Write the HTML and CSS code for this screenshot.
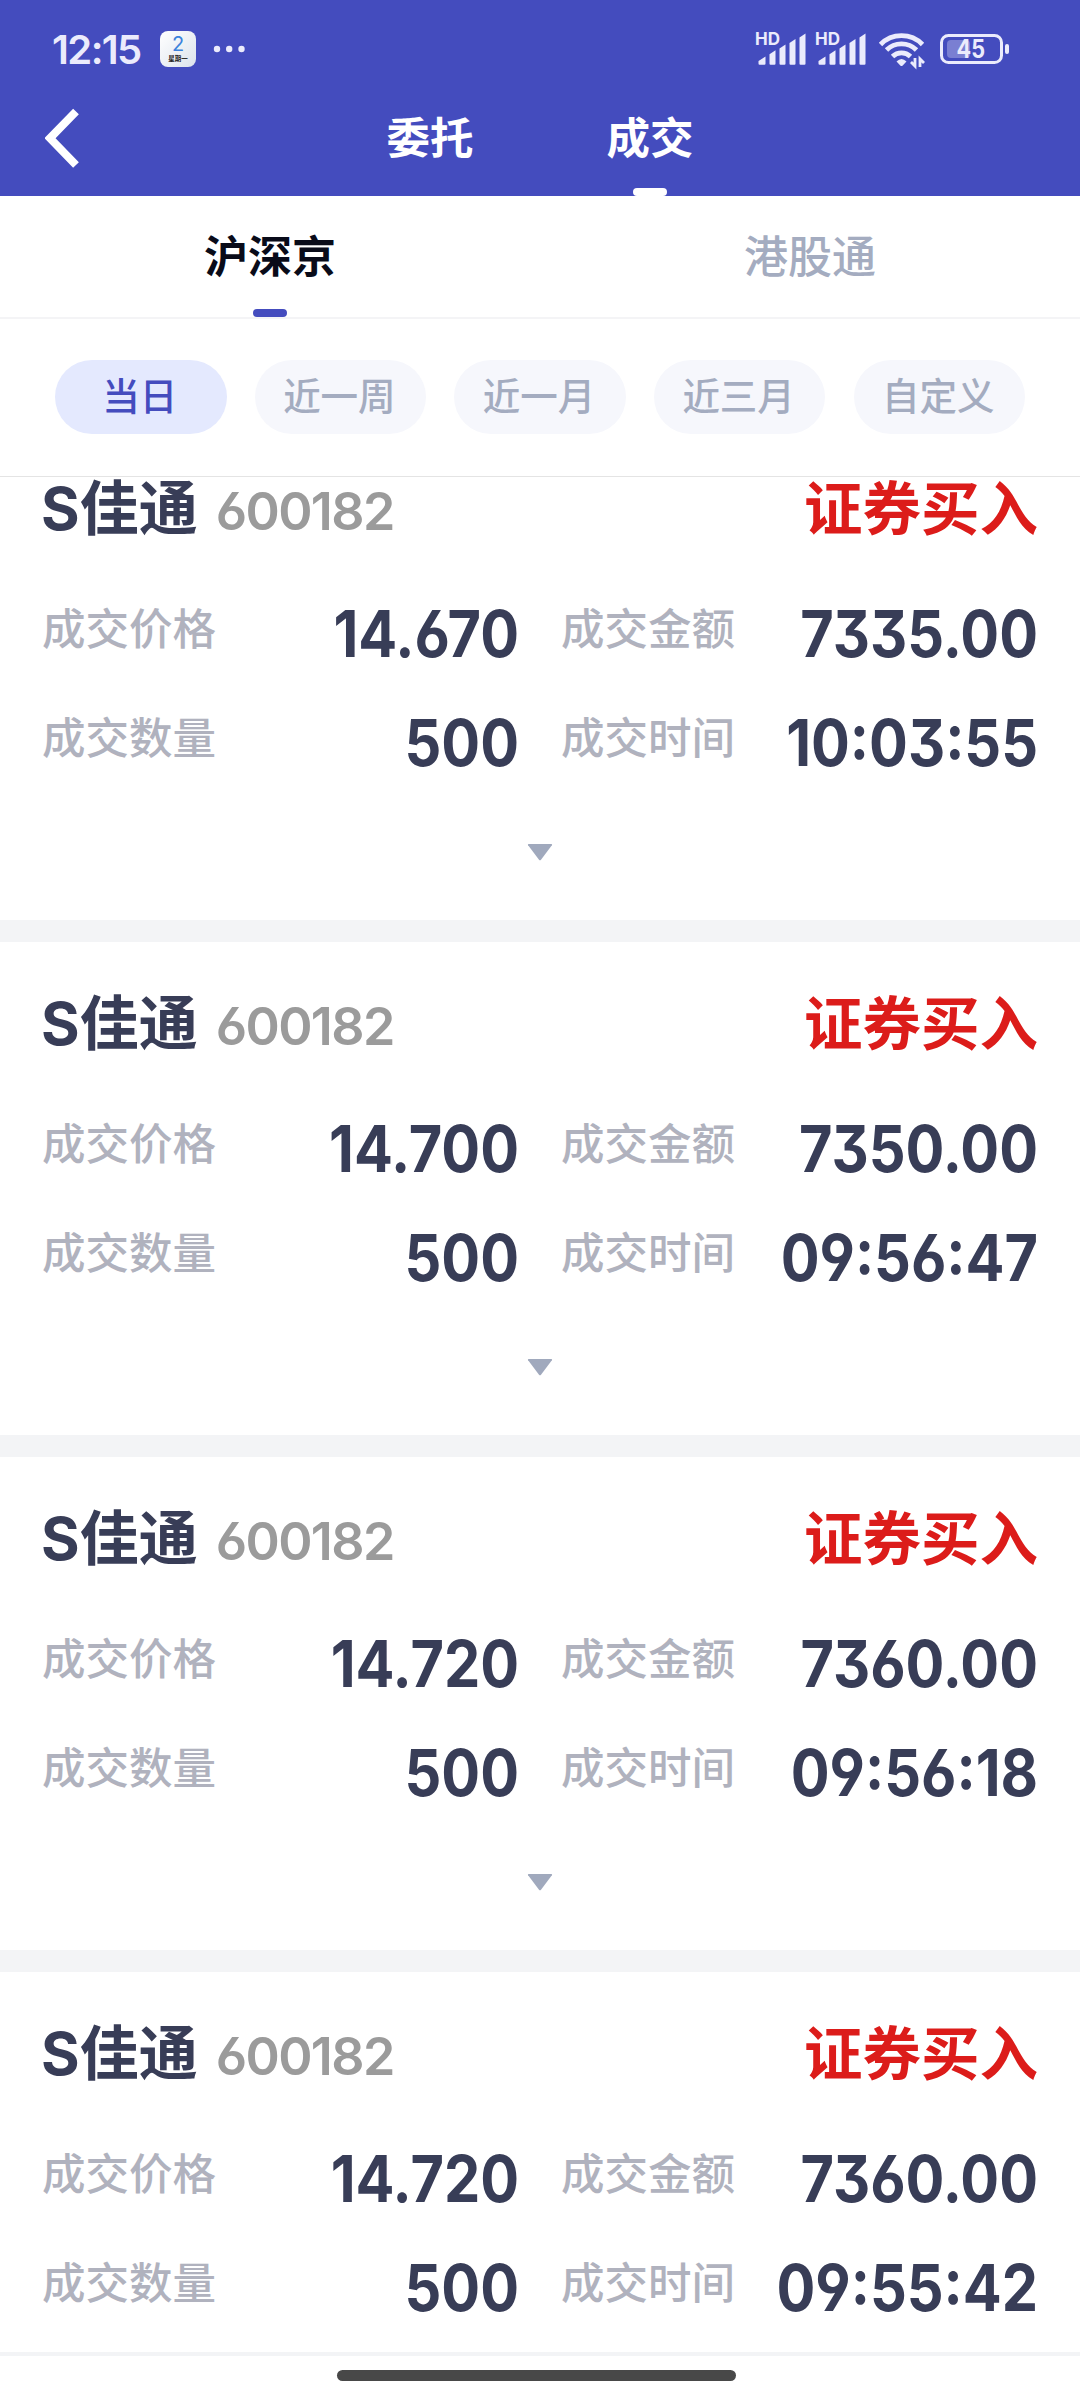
FILE: index.html
```html
<!DOCTYPE html>
<html lang="zh-CN">
<head>
<meta charset="utf-8">
<title>成交</title>
<link rel="stylesheet" href="styles.css">
</head>
<body>
<header class="header">
  <div class="status">
    <span class="clock">12:15</span>
    <span class="calendar"><b class="cal-day">2</b><i class="cal-week">星期一</i></span>
    <svg class="more" width="32" height="8" viewBox="0 0 32 8"><circle cx="4" cy="4" r="3.2"/><circle cx="16.2" cy="4" r="3.2"/><circle cx="28.5" cy="4" r="3.2"/></svg>
    <svg class="sysicons" width="260" height="40" viewBox="0 0 260 40">
      <defs><g id="signal"><text class="hd" x="-1" y="13.2" textLength="25">HD</text><path d="M2.500 31.500v-2.500l7-4.500v7.200q0 1-1 1H3.500q-1 0-1-1.200zM13.500 31.700v-9.500l6-4v13.500q0 1-1 1h-4q-1 0-1-1zM23.500 31.700V16.500l6-4v19.200q0 1-1 1h-4q-1 0-1-1zM33.500 31.700V11l6-4v24.700q0 1-1 1h-4q-1 0-1-1zM43.500 31.700V5.500l6-4v30.200q0 1-1 1h-4q-1 0-1-1z"/></g></defs>
      <use href="#signal" x="0" y="0"/><use href="#signal" x="60" y="0"/>
      <path class="arc" d="M124.500 12.500a29.500 29.500 0 0 1 42 0M130.500 18a21.300 21.300 0 0 1 30 0M136.500 24.500a12.800 12.800 0 0 1 18 0"/>
      <path d="M140.500 29.500q5-5 10 0l-3.800 4q-1.200 1-2.400 0z"/>
      <path class="updown" d="M159 26v8l-4-4M164 35v-8l4 4"/>
      <rect class="battery" x="185.500" y="3.500" width="60" height="27" rx="7"/>
      <rect class="charge" x="191" y="8" width="23" height="18" rx="4"/>
      <rect x="249" y="12" width="4" height="10" rx="2"/>
      <text class="level" x="200.500" y="26.400" textLength="28.500" lengthAdjust="spacingAndGlyphs">45</text>
    </svg>
  </div>
  <nav class="navbar">
    <svg class="back" width="36" height="60" viewBox="0 0 36 60"><path d="M31 3.500L5 30.200L31 57"/></svg>
    <div class="nav-tabs"><span class="nav-tab">委托</span><span class="nav-tab active">成交</span></div>
  </nav>
</header>
<nav class="markets"><span class="market active">沪深京</span><span class="market">港股通</span></nav>
<nav class="ranges"><span class="chip active">当日</span><span class="chip">近一周</span><span class="chip">近一月</span><span class="chip">近三月</span><span class="chip">自定义</span></nav>
<main class="list">
  <article class="deal">
    <h2 class="deal-head"><span class="name">S佳通</span><span class="code">600182</span><span class="side">证券买入</span></h2>
    <dl class="fields"><dt>成交价格</dt><dd>14.670</dd><dt>成交金额</dt><dd>7335.00</dd><dt>成交数量</dt><dd>500</dd><dt>成交时间</dt><dd>10:03:55</dd></dl>
    <svg class="expand" width="26" height="18" viewBox="0 0 26 18"><path d="M1.500 0h23q1 .3 .4 1.300L14 15.700q-1 1-2 0L1.100 1.300q-.6-1 .4-1.300z"/></svg>
  </article>
  <article class="deal">
    <h2 class="deal-head"><span class="name">S佳通</span><span class="code">600182</span><span class="side">证券买入</span></h2>
    <dl class="fields"><dt>成交价格</dt><dd>14.700</dd><dt>成交金额</dt><dd>7350.00</dd><dt>成交数量</dt><dd>500</dd><dt>成交时间</dt><dd>09:56:47</dd></dl>
    <svg class="expand" width="26" height="18" viewBox="0 0 26 18"><path d="M1.500 0h23q1 .3 .4 1.300L14 15.700q-1 1-2 0L1.100 1.300q-.6-1 .4-1.300z"/></svg>
  </article>
  <article class="deal">
    <h2 class="deal-head"><span class="name">S佳通</span><span class="code">600182</span><span class="side">证券买入</span></h2>
    <dl class="fields"><dt>成交价格</dt><dd>14.720</dd><dt>成交金额</dt><dd>7360.00</dd><dt>成交数量</dt><dd>500</dd><dt>成交时间</dt><dd>09:56:18</dd></dl>
    <svg class="expand" width="26" height="18" viewBox="0 0 26 18"><path d="M1.500 0h23q1 .3 .4 1.300L14 15.700q-1 1-2 0L1.100 1.300q-.6-1 .4-1.300z"/></svg>
  </article>
  <article class="deal">
    <h2 class="deal-head"><span class="name">S佳通</span><span class="code">600182</span><span class="side">证券买入</span></h2>
    <dl class="fields"><dt>成交价格</dt><dd>14.720</dd><dt>成交金额</dt><dd>7360.00</dd><dt>成交数量</dt><dd>500</dd><dt>成交时间</dt><dd>09:55:42</dd></dl>
  </article>
</main>
<footer class="home"><span class="home-bar"></span></footer>
</body>
</html>
```
FILE: styles.css
```css
* { box-sizing: border-box; }
body {
  margin: 0;
  width: 1080px;
  height: 2400px;
  overflow: hidden;
  display: flex;
  flex-direction: column;
  background: #fff;
  font-family: Inter, "Noto Sans CJK SC", sans-serif;
  font-feature-settings: "cv03", "cv04", "cv09";
  white-space: nowrap;
}
.header { height: 196px; flex: none; background: #444cbe; color: #fff; }
.status { height: 80px; padding: 31px 0 0 52px; display: flex; align-items: flex-start; }
.clock { width: 108px; font-size: 40px; font-weight: 600; line-height: 37px; letter-spacing: -1.6px; color: #ebebfc; }
.calendar {
  width: 36px; height: 36px; border-radius: 8px;
  background: linear-gradient(135deg, #fff, #dce3ec);
  display: flex; flex-direction: column; align-items: center;
}
.cal-day { font: 400 20px/23px Inter, sans-serif; margin-top: 2px; color: #3b82dc; }
.cal-week { font: 700 6.500px/7px "Noto Sans CJK SC", sans-serif; margin-top: -1px; color: #222; }
.more { margin: 14px 0 0 17px; fill: #ebebfc; }
.sysicons { margin: 1px 0 0 511px; fill: #ebebfc; overflow: visible; }
.hd { font-size: 17px; font-weight: 700; }
.arc { fill: none; stroke: #ebebfc; stroke-width: 4.800; }
.updown { fill: none; stroke: #ebebfc; stroke-width: 2.800; }
.battery { fill: none; stroke: #ebebfc; stroke-width: 3; }
.charge { fill: #7a7fd2; }
.level { font-size: 25px; font-weight: 700; }
.navbar { height: 116px; display: flex; padding-left: 45px; }
.back { margin-top: 28px; fill: none; stroke: #fff; stroke-width: 8; }
.nav-tabs { display: flex; gap: 132px; margin-left: 305px; font-size: 43.500px; font-weight: 700; line-height: 117px; }
.nav-tab { width: 88px; display: flex; flex-direction: column; align-items: center; }
.nav-tab.active::after, .market.active::after { content: ""; width: 34px; height: 8px; border-radius: 4px; background: #fff; margin-top: -9px; }
.markets { height: 123px; flex: none; display: flex; border-bottom: 2px solid #f4f4f6; font-size: 44px; line-height: 123px; }
.market { flex: 1; display: flex; flex-direction: column; align-items: center; color: #a4acc0; font-weight: 500; }
.market.active { color: #090b19; font-weight: 700; }
.market.active::after { background: #444cbe; margin-top: -10px; }
.ranges { height: 158px; flex: none; padding: 41px 55px; display: flex; justify-content: space-between; border-bottom: 1px solid #e4e4e4; }
.chip { width: 171.500px; height: 74px; border-radius: 37px; background: #f6f7fc; color: #a4acc0; font-size: 37.500px; font-weight: 500; line-height: 74px; text-align: center; padding-right: 2px; }
.chip.active { background: #e4e9fe; color: #444cbe; }
.list { height: 1875px; flex: none; display: flex; flex-direction: column; }
.deal { height: 515px; flex: none; padding: 52px 42px 0 41px; border-bottom: 22px solid #f3f4f6; }
.deal:first-child { height: 465px; padding-top: 2px; }
.deal:last-child { height: 380px; border-bottom: 0; }
.deal-head { margin: 0; height: 60px; display: flex; align-items: baseline; line-height: 60px; font-size: 58.500px; font-weight: 700; color: #383d57; }
.name { font-size: 59px; }
.code { margin-left: 18px; font-size: 52px; font-weight: 600; letter-spacing: -1.600px; color: #9b9b9b; }
.side { margin-left: auto; color: #dc1c1a; }
.fields { margin: 36px 0 0; display: grid; grid-template-columns: 176px 302px 177px 1fr; grid-auto-rows: 109px; line-height: 109px; }
.fields dt { font-size: 43.500px; color: #b0b2be; font-weight: 500; padding-left: 1px; }
.fields dt:nth-of-type(even) { margin-left: 41px; }
.fields dd { margin: 0; padding-top: 4px; text-align: right; font-size: 64px; font-weight: 700; color: #383d57; transform: scaleX(.9); transform-origin: right; }
.expand { display: block; margin: 51px auto 0 486px; fill: #a0a9bd; }
.home { height: 48px; border-top: 4px solid #f3f4f6; display: flex; padding: 14px 0 0 337px; }
.home-bar { width: 399px; height: 11px; border-radius: 6px; background: #484848; }
```
